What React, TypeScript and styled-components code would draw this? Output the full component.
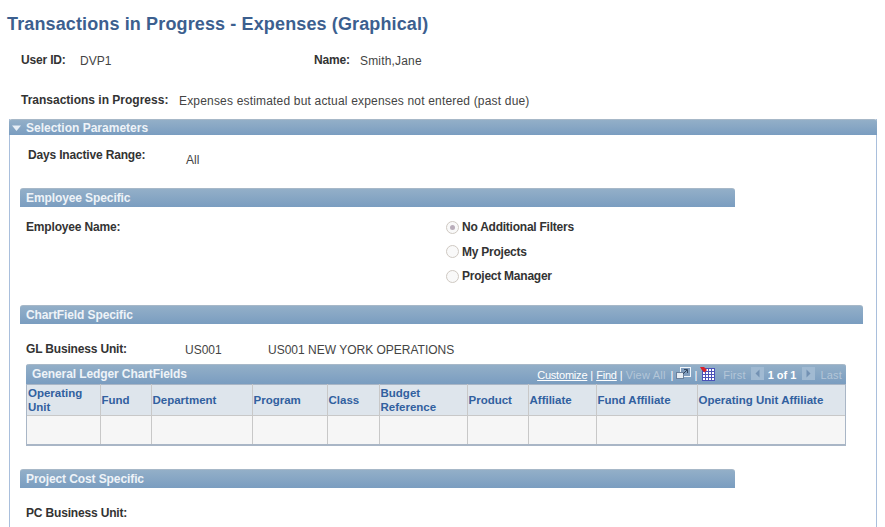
import React from 'react'
import styled, { createGlobalStyle } from 'styled-components'

const GlobalStyle = createGlobalStyle`
  html, body {
    margin: 0;
    padding: 0;
    background: #fff;
    overflow: hidden;
  }
  body {
    font-family: "Liberation Sans", Arial, sans-serif;
    font-size: 12px;
    color: #333;
  }
`

const barGradient = 'linear-gradient(to bottom, #93afc8 0%, #7a9dc0 100%)'

const Page = styled.div`
  width: 885px;
  height: 527px;
  overflow: hidden;
  padding: 13px 0 0 7px;
  box-sizing: border-box;
`
const Title = styled.h1`
  margin: 0;
  font-size: 18px;
  letter-spacing: 0.13px;
  line-height: 22px;
  font-weight: bold;
  color: #3c5f8f;
`
const InfoRow = styled.div<{ $top: number }>`
  display: flex;
  align-items: flex-start;
  margin: ${(p) => p.$top}px 0 0 14px;
  height: 15px;
`
const Label = styled.span<{ $width: number; $tight?: boolean }>`
  width: ${(p) => p.$width}px;
  flex-shrink: 0;
  letter-spacing: ${(p) => (p.$tight === false ? 'normal' : '-0.17px')};
  font-weight: bold;
  line-height: 14px;
  color: #333;
`
const Value = styled.span<{ $width?: number; $drop?: number; $spaced?: boolean }>`
  width: ${(p) => (p.$width ? `${p.$width}px` : 'auto')};
  flex-shrink: 0;
  line-height: 14px;
  margin-top: ${(p) => p.$drop ?? 1}px;
  letter-spacing: ${(p) => (p.$spaced ? '0.18px' : 'normal')};
  color: #444;
`
const Panel = styled.section`
  width: 868px;
  margin: 11px 0 0 2px;
  box-sizing: border-box;
  border-left: 1px solid #a9bfdc;
  border-right: 1px solid #a9bfdc;
  height: 420px;
`
const PanelHeader = styled.div`
  height: 16px;
  margin: 0 -1px;
  display: flex;
  align-items: center;
  gap: 5px;
  padding-left: 3px;
  background: ${barGradient};
  border-top: 1px solid #a7b8c8;
  box-sizing: border-box;
  border-radius: 3px 3px 0 0;
  color: #eef3f8;
  font-weight: bold;
  font-size: 12px;
`
const Arrow = styled.svg`
  width: 9px;
  height: 6px;
`
const PanelBody = styled.div`
  padding-left: 10px;
`
const PlainRow = styled.div<{ $top: number; $inset: number }>`
  display: flex;
  align-items: flex-start;
  margin: ${(p) => p.$top}px 0 0 ${(p) => p.$inset}px;
`
const SectionBar = styled.div<{ $width: number; $top: number }>`
  width: ${(p) => p.$width}px;
  height: 19px;
  margin-top: ${(p) => p.$top}px;
  padding-left: 6px;
  box-sizing: border-box;
  background: ${barGradient};
  border-top: 1px solid #a7b8c8;
  border-radius: 3px 3px 0 0;
  color: #eef3f8;
  font-weight: bold;
  font-size: 12px;
  letter-spacing: -0.1px;
  line-height: 18px;
`
const EmployeeRow = styled.div`
  display: flex;
  margin: 13px 0 0 6px;
`
const RadioGroup = styled.div`
  display: flex;
  flex-direction: column;
  gap: 10.5px;
  margin-left: 300px;
`
const RadioRow = styled.label`
  display: flex;
  align-items: center;
  gap: 3px;
  height: 14px;
  letter-spacing: -0.24px;
  font-weight: bold;
  color: #333;
`
const Radio = styled.span<{ $checked?: boolean }>`
  width: 13px;
  height: 13px;
  box-sizing: border-box;
  border-radius: 50%;
  border: 1px solid #cfc9c2;
  background: #f9f9f9;
  display: flex;
  align-items: center;
  justify-content: center;
  &::after {
    content: '';
    display: ${(p) => (p.$checked ? 'block' : 'none')};
    width: 5px;
    height: 5px;
    border-radius: 50%;
    background: #b9adba;
  }
`
const Grid = styled.div`
  width: 820px;
  margin: 7px 0 0 6px;
  border: 1px solid #a9b6c6;
  border-top: none;
  border-bottom-width: 2px;
  border-radius: 3px 3px 0 0;
  box-sizing: border-box;
`
const GridBar = styled.div`
  height: 20px;
  margin: 0 -1px;
  display: flex;
  align-items: center;
  justify-content: space-between;
  padding: 0 4px 0 6px;
  background: ${barGradient};
  border-top: 1px solid #a7b8c8;
  border-radius: 3px 3px 0 0;
  box-sizing: border-box;
  color: #eef3f8;
`
const GridTitle = styled.span`
  align-self: flex-start;
  font-size: 12px;
  letter-spacing: -0.1px;
  font-weight: bold;
  line-height: 18px;
`
const GridNav = styled.div`
  display: flex;
  align-items: center;
  padding-top: 1px;
  font-size: 11px;
  font-weight: normal;
  color: #fff;
`
const NavLink = styled.span`
  text-decoration: underline;
  letter-spacing: -0.2px;
  color: #fff;
`
const NavMuted = styled.span<{ $gap?: number; $after?: number }>`
  color: #b4c6d8;
  letter-spacing: 0.2px;
  margin-left: ${(p) => p.$gap ?? 0}px;
  margin-right: ${(p) => p.$after ?? 0}px;
`
const NavSep = styled.span`
  margin: 0 3px;
  color: #fff;
`
const NavCount = styled.span`
  font-weight: bold;
  margin: 0 6px 0 4px;
`
const NavIcon = styled.svg<{ $gap?: number }>`
  margin-left: ${(p) => p.$gap ?? 0}px;
  margin-top: -3px;
  display: block;
`
const Table = styled.table`
  width: 100%;
  table-layout: fixed;
  border-collapse: collapse;
`
const HeadCell = styled.th<{ $width: number }>`
  width: ${(p) => p.$width}px;
  height: 31px;
  box-sizing: border-box;
  padding: 0 1px;
  background: #dee5ec;
  border-right: 1px solid #c8c8c8;
  border-bottom: 1px solid #c8c8c8;
  border-top: 1px solid #a9b6c6;
  text-align: left;
  vertical-align: middle;
  font-size: 11.5px;
  line-height: 14px;
  font-weight: bold;
  color: #31609f;
  &:last-child {
    border-right: none;
  }
`
const BodyCell = styled.td`
  height: 28px;
  padding: 0;
  background: #f6f6f6;
  border-right: 1px solid #c8c8c8;
  &:last-child {
    border-right: none;
  }
`

const columns = [
  { name: 'Operating Unit', width: 73 },
  { name: 'Fund', width: 51 },
  { name: 'Department', width: 101 },
  { name: 'Program', width: 75 },
  { name: 'Class', width: 52 },
  { name: 'Budget Reference', width: 88 },
  { name: 'Product', width: 61 },
  { name: 'Affiliate', width: 68 },
  { name: 'Fund Affiliate', width: 101 },
  { name: 'Operating Unit Affiliate', width: 148 },
]

const App = () => {
  return (
    <Page>
      <GlobalStyle />
      <Title>Transactions in Progress - Expenses (Graphical)</Title>

      <InfoRow $top={18}>
        <Label $width={59}>User ID:</Label>
        <Value $width={234}>DVP1</Value>
        <Label $width={46}>Name:</Label>
        <Value $spaced>Smith,Jane</Value>
      </InfoRow>
      <InfoRow $top={25}>
        <Label $width={158} $tight={false}>Transactions in Progress:</Label>
        <Value $spaced>Expenses estimated but actual expenses not entered (past due)</Value>
      </InfoRow>

      <Panel>
        <PanelHeader>
          <Arrow viewBox="0 0 9 6">
            <path d="M0 0.5h9L4.5 6z" fill="#e6eef6" />
          </Arrow>
          Selection Parameters
        </PanelHeader>
        <PanelBody>
          <PlainRow $top={13} $inset={8}>
            <Label $width={158}>Days Inactive Range:</Label>
            <Value $drop={5}>All</Value>
          </PlainRow>

          <SectionBar $width={715} $top={21}>Employee Specific</SectionBar>
          <EmployeeRow>
            <Label $width={120}>Employee Name:</Label>
            <RadioGroup>
              <RadioRow><Radio $checked />No Additional Filters</RadioRow>
              <RadioRow><Radio />My Projects</RadioRow>
              <RadioRow><Radio />Project Manager</RadioRow>
            </RadioGroup>
          </EmployeeRow>

          <SectionBar $width={843} $top={22}>ChartField Specific</SectionBar>
          <PlainRow $top={18} $inset={6}>
            <Label $width={159}>GL Business Unit:</Label>
            <Value $width={83}>US001</Value>
            <Value>US001 NEW YORK OPERATIONS</Value>
          </PlainRow>

          <Grid>
            <GridBar>
              <GridTitle>General Ledger ChartFields</GridTitle>
              <GridNav>
                <NavLink>Customize</NavLink>
                <NavSep>|</NavSep>
                <NavLink>Find</NavLink>
                <NavSep>|</NavSep>
                <NavMuted $after={2}>View All</NavMuted>
                <NavSep>|</NavSep>
                <NavIcon width="15" height="13" viewBox="0 0 15 13">
                  <rect x="4.5" y="0.5" width="10" height="9" fill="#7f9cbd" stroke="#f2f6fa" />
                  <rect x="0.5" y="5.5" width="7" height="6" fill="#e6edf4" stroke="#6a809c" />
                  <path d="M7 7l4-4M8 2.5h3.5V6" fill="none" stroke="#33475f" />
                </NavIcon>
                <NavSep>|</NavSep>
                <NavIcon width="15" height="14" viewBox="0 0 15 14">
                  <rect x="2.5" y="1.5" width="12" height="12" fill="#fff" stroke="#4a52b8" />
                  <path d="M2.5 4.5h12M2.5 7.5h12M2.5 10.5h12M5.5 1.5v12M8.5 1.5v12M11.5 1.5v12" stroke="#4a52b8" />
                  <path d="M0 0h4l3 3-2.5 2.5-3-3z" fill="#d8232a" />
                </NavIcon>
                <NavMuted $gap={8}>First</NavMuted>
                <NavIcon $gap={5} width="13" height="13" viewBox="0 0 13 13">
                  <rect width="13" height="13" fill="#a1bad2" />
                  <path d="M8.5 2.5v8l-4-4z" fill="#7391b3" />
                </NavIcon>
                <NavCount>1 of 1</NavCount>
                <NavIcon width="13" height="13" viewBox="0 0 13 13">
                  <rect width="13" height="13" fill="#a1bad2" />
                  <path d="M4.5 2.5v8l4-4z" fill="#7391b3" />
                </NavIcon>
                <NavMuted $gap={5}>Last</NavMuted>
              </GridNav>
            </GridBar>
            <Table>
              <thead>
                <tr>
                  {columns.map((c) => (
                    <HeadCell key={c.name} $width={c.width}>{c.name}</HeadCell>
                  ))}
                </tr>
              </thead>
              <tbody>
                <tr>
                  {columns.map((c) => (
                    <BodyCell key={c.name} />
                  ))}
                </tr>
              </tbody>
            </Table>
          </Grid>

          <SectionBar $width={715} $top={23}>Project Cost Specific</SectionBar>
          <PlainRow $top={18} $inset={6}>
            <Label $width={159}>PC Business Unit:</Label>
          </PlainRow>
        </PanelBody>
      </Panel>
    </Page>
  )
}

export default App
